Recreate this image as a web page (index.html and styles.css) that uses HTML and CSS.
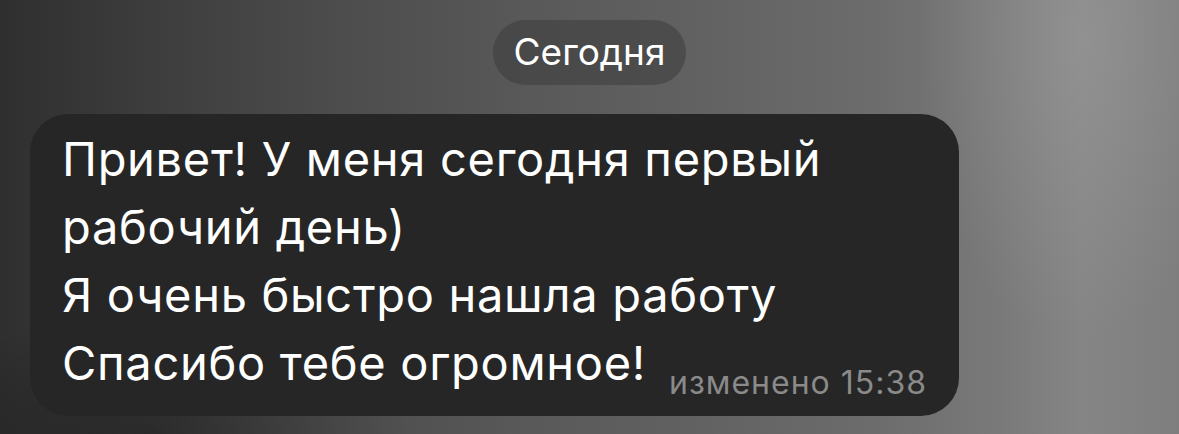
FILE: index.html
```html
<!DOCTYPE html>
<html lang="ru">
<head>
<meta charset="utf-8">
<link rel="stylesheet" href="styles.css">
</head>
<body>
<div class="chat">
  <div class="date-pill">Сегодня</div>
  <div class="bubble">
    <p class="text">Привет! У меня сегодня первый<br>рабочий день)<br>Я очень быстро нашла работу<br>Спасибо тебе огромное!<span class="meta">изменено 15:38</span></p>
  </div>
</div>
</body>
</html>
```
FILE: styles.css
```css
html, body {
  margin: 0;
  padding: 0;
}
body {
  width: 1179px;
  height: 434px;
  overflow: hidden;
  font-family: Inter, "Liberation Sans", Arial, sans-serif;
  background:
    radial-gradient(ellipse 160px 300px at 1080px 40px, rgba(160,160,160,0.45), rgba(160,160,160,0) 100%),
    radial-gradient(ellipse 260px 120px at 150px 434px, rgba(0,0,0,0.3), rgba(0,0,0,0) 100%),
    linear-gradient(to right, #2f2f2f 0%, #3c3c3c 12%, #4c4c4c 28%, #595959 45%, #626262 60%, #6d6d6d 75%, #7a7a7a 85%, #858585 92%, #7e7e7e 100%);
}
.chat {
  display: flex;
  flex-direction: column;
  align-items: flex-start;
  padding-top: 20px;
}
.date-pill {
  align-self: center;
  height: 65px;
  padding: 0 21px 2px;
  box-sizing: border-box;
  display: flex;
  align-items: center;
  border-radius: 33px;
  background: rgba(60,60,60,0.55);
  color: #ffffff;
  font-size: 37px;
}
.bubble {
  margin-top: 29px;
  margin-left: 30px;
  width: 929px;
  height: 302px;
  box-sizing: border-box;
  padding: 11px 20px 0 32px;
  background: #262626;
  border-radius: 38px;
}
.text {
  margin: 0;
  color: #ffffff;
  font-size: 47px;
  letter-spacing: 0.7px;
  line-height: 68px;
  white-space: nowrap;
}
.meta {
  display: inline-block;
  margin-left: 23px;
  color: #8a8a8a;
  font-size: 32px;
  letter-spacing: 1px;
  line-height: 30px;
  vertical-align: -14px;
}
```
